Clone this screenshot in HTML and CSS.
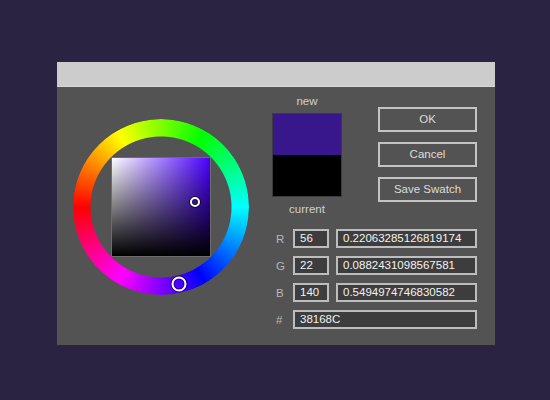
FILE: index.html
```html
<!DOCTYPE html>
<html>
<head>
<meta charset="utf-8">
<link rel="stylesheet" href="styles.css">
</head>
<body>
<div class="dialog">
  <div class="titlebar"></div>
  <div class="content">
    <div class="picker">
      <div class="wheel">
        <div class="ring"></div>
        <div class="square">
          <div class="sv-marker"></div>
        </div>
        <div class="hue-marker"></div>
      </div>
    </div>
    <div class="panel">
      <div class="top">
        <div class="preview">
          <div class="cap">new</div>
          <div class="swatch">
            <div class="swatch-new"></div>
            <div class="swatch-cur"></div>
          </div>
          <div class="cap">current</div>
        </div>
        <div class="buttons">
          <div class="btn">OK</div>
          <div class="btn">Cancel</div>
          <div class="btn">Save Swatch</div>
        </div>
      </div>
      <div class="fields">
        <div class="row"><span class="lbl">R</span><div class="inp short">56</div><div class="inp long">0.22063285126819174</div></div>
        <div class="row"><span class="lbl">G</span><div class="inp short">22</div><div class="inp long">0.0882431098567581</div></div>
        <div class="row"><span class="lbl">B</span><div class="inp short">140</div><div class="inp long">0.5494974746830582</div></div>
        <div class="row"><span class="lbl">#</span><div class="inp hex">38168C</div></div>
      </div>
    </div>
  </div>
</div>
</body>
</html>
```
FILE: styles.css
```css
html, body {
  margin: 0;
  padding: 0;
}
body {
  background: #2a2342;
  width: 550px;
  height: 400px;
  overflow: hidden;
  font-family: "Liberation Sans", Arial, sans-serif;
}
.dialog {
  margin: 62px 0 0 57px;
  width: 438px;
  height: 283px;
  background: #535353;
}
.titlebar {
  height: 25px;
  background: #cccccc;
  box-sizing: border-box;
  border-bottom: 1px solid #d8d8d8;
}
.content {
  display: flex;
  height: 258px;
}
.picker {
  padding: 32px 0 0 16px;
}
.wheel {
  position: relative;
  width: 176px;
  height: 176px;
  display: grid;
  place-items: center;
}
.ring {
  grid-area: 1 / 1;
  width: 176px;
  height: 176px;
  border-radius: 50%;
  background: conic-gradient(from -90deg, #ff0000 0deg, #ffff00 60deg, #00ff00 120deg, #00ffff 180deg, #0000ff 240deg, #ff00ff 300deg, #ff0000 360deg);
  -webkit-mask: radial-gradient(closest-side, transparent 70px, #000 71px);
  mask: radial-gradient(closest-side, transparent 70px, #000 71px);
}
.square {
  grid-area: 1 / 1;
  position: relative;
  width: 100px;
  height: 100px;
  box-sizing: border-box;
  border: 1px solid #6c6c6c;
  background: linear-gradient(to top, #000 0%, rgba(0,0,0,0) 100%), linear-gradient(to right, #ffffff 0%, #4a00ff 100%);
}
.sv-marker {
  position: absolute;
  left: 83px;
  top: 44px;
  width: 10px;
  height: 10px;
  box-sizing: border-box;
  border: 2px solid #fff;
  border-radius: 50%;
  transform: translate(-50%, -50%);
  box-shadow: 0 0 0 1px rgba(0,0,0,0.6), inset 0 0 0 1px rgba(0,0,0,0.5);
}
.hue-marker {
  position: absolute;
  left: 106px;
  top: 165px;
  width: 15px;
  height: 15px;
  box-sizing: border-box;
  border: 2px solid #fff;
  border-radius: 50%;
  transform: translate(-50%, -50%);
  box-shadow: 0 0 0 1px rgba(0,0,0,0.6), inset 0 0 0 1px rgba(0,0,0,0.5);
}
.panel {
  margin-left: 23px;
  width: 205px;
  display: flex;
  flex-direction: column;
}
.top {
  display: flex;
}
.preview {
  width: 70px;
  padding-top: 7px;
  display: flex;
  flex-direction: column;
  align-items: center;
}
.cap {
  height: 14px;
  line-height: 14px;
  font-size: 11.5px;
  color: #d0d0d0;
}
.swatch {
  margin: 5px 0;
  width: 70px;
  height: 84px;
  box-sizing: border-box;
  border: 1px solid #3c3c3c;
  display: flex;
  flex-direction: column;
}
.swatch-new {
  flex: 1;
  background: #38168c;
}
.swatch-cur {
  flex: 1;
  background: #000;
}
.buttons {
  margin-left: 36px;
  padding-top: 20px;
  display: flex;
  flex-direction: column;
  gap: 10px;
}
.btn {
  width: 99px;
  height: 25px;
  box-sizing: border-box;
  border: 2px solid #c4c4c4;
  color: #dcdcdc;
  font-size: 11.5px;
  line-height: 21px;
  text-align: center;
}
.fields {
  margin-top: 13px;
  display: flex;
  flex-direction: column;
  gap: 8px;
}
.row {
  display: flex;
  align-items: center;
  height: 19px;
}
.lbl {
  width: 21px;
  box-sizing: border-box;
  padding-left: 4px;
  color: #b8b8b8;
  font-size: 11.5px;
}
.inp {
  height: 19px;
  box-sizing: border-box;
  border: 2px solid #bdbdbd;
  background: #3d3d3d;
  color: #f2f2f2;
  font-size: 11.5px;
  line-height: 15px;
  padding-left: 5px;
}
.short {
  width: 36px;
}
.long {
  margin-left: 7px;
  width: 141px;
}
.hex {
  width: 184px;
}
```
